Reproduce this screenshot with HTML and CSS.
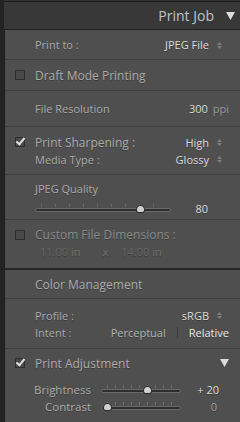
FILE: index.html
```html
<!DOCTYPE html>
<html lang="en">
<head>
  <meta charset="UTF-8">
  <title>Print Job</title>
  <link rel="stylesheet" href="styles.css">
</head>
<body>
  <div class="app">
    <div class="gutter"></div>
    <div class="main">
      <div class="prev-edge"></div>
      <div class="panel-head">
        <span class="panel-title">Print Job</span>
        <svg class="tri" width="9" height="8" viewBox="0 0 9 8"><path d="M0 0 H9 L4.5 8 Z" fill="#dcdcdc"/></svg>
      </div>

      <div class="panel">
        <div class="row row-printto">
          <span class="label">Print to :</span>
          <span class="value">JPEG File
            <svg class="stepper" width="5" height="7" viewBox="0 0 5 7"><path d="M0 3 L2.5 0 L5 3 Z M0 4 H5 L2.5 7 Z" fill="#7c7c7c"/></svg>
          </span>
        </div>

        <div class="row row-draft">
          <span class="check"></span>
          <span class="label big">Draft Mode Printing</span>
        </div>

        <div class="row row-res">
          <span class="label">File Resolution</span>
          <span class="value value-wide">300 <span class="unit">ppi</span></span>
        </div>

        <div class="row row-sharp">
          <div class="line">
            <span class="check checked"></span>
            <span class="label big">Print Sharpening :</span>
            <span class="value">High
              <svg class="stepper" width="5" height="7" viewBox="0 0 5 7"><path d="M0 3 L2.5 0 L5 3 Z M0 4 H5 L2.5 7 Z" fill="#7c7c7c"/></svg>
            </span>
          </div>
          <div class="line">
            <span class="label">Media Type :</span>
            <span class="value">Glossy
              <svg class="stepper" width="5" height="7" viewBox="0 0 5 7"><path d="M0 3 L2.5 0 L5 3 Z M0 4 H5 L2.5 7 Z" fill="#7c7c7c"/></svg>
            </span>
          </div>
        </div>

        <div class="row row-quality">
          <span class="label">JPEG Quality</span>
          <div class="slider-line">
            <div class="slider slider-long">
              <div class="ticks"></div>
              <div class="track"></div>
              <div class="thumb" style="left: 77%"></div>
            </div>
            <span class="slider-val">80</span>
          </div>
        </div>

        <div class="row row-dims">
          <div class="line">
            <span class="check"></span>
            <span class="label big dimmed">Custom File Dimensions :</span>
          </div>
          <div class="dims">
            <span><b>11.00</b> in</span>
            <span class="times">x</span>
            <span><b>14.00</b> in</span>
          </div>
        </div>

        <div class="row row-cm">
          <span class="label big">Color Management</span>
        </div>

        <div class="row row-profile">
          <div class="line">
            <span class="label">Profile :</span>
            <span class="value">sRGB
              <svg class="stepper" width="5" height="7" viewBox="0 0 5 7"><path d="M0 3 L2.5 0 L5 3 Z M0 4 H5 L2.5 7 Z" fill="#7c7c7c"/></svg>
            </span>
          </div>
          <div class="line">
            <span class="label">Intent :</span>
            <span class="intent">
              <span class="intent-off">Perceptual</span>
              <span class="bar"></span>
              <span class="intent-on">Relative</span>
            </span>
          </div>
        </div>

        <div class="row row-adjust">
          <div class="line adjust-head">
            <span class="check checked"></span>
            <span class="label big">Print Adjustment</span>
            <svg class="tri tri-adjust" width="9" height="8" viewBox="0 0 9 8"><path d="M0 0 H9 L4.5 8 Z" fill="#dcdcdc"/></svg>
          </div>
          <div class="adj">
            <span class="adj-label">Brightness</span>
            <div class="slider slider-short">
              <div class="ticks"></div>
              <div class="track"></div>
              <div class="thumb" style="left: 58%"></div>
            </div>
            <span class="adj-val">+ 20</span>
          </div>
          <div class="adj">
            <span class="adj-label">Contrast</span>
            <div class="slider slider-short">
              <div class="ticks"></div>
              <div class="track"></div>
              <div class="thumb" style="left: 8%"></div>
            </div>
            <span class="adj-val">0</span>
          </div>
        </div>
      </div>
    </div>
  </div>
</body>
</html>
```

FILE: styles.css
```css
* {
  margin: 0;
  padding: 0;
  box-sizing: border-box;
}

body {
  background-color: #2c2c2c;
  font-family: "Open Sans", "Liberation Sans", sans-serif;
  font-size: 11px;
  color: #ababab;
  width: 240px;
  height: 422px;
  overflow: hidden;
}

.app {
  display: flex;
  height: 422px;
}

.gutter {
  width: 4px;
  background-color: #242424;
}

.main {
  flex: 1;
  display: flex;
  flex-direction: column;
}

.prev-edge {
  height: 2px;
  border-bottom: 1px solid #1c1c1c;
  background-color: #333;
}

.panel-head {
  height: 27px;
  background-color: #383838;
  display: flex;
  align-items: center;
  justify-content: flex-end;
  padding-right: 5px;
  gap: 12px;
}

.panel-title {
  font-size: 14px;
  color: #c2c2c2;
}

.tri {
  display: block;
}

.tri-adjust {
  margin-left: auto;
  margin-right: 0;
}

.panel {
  flex: 1;
  background-color: #4f4f4f;
  border: 1px solid #1e1e1e;
  border-right: none;
  border-bottom: none;
  text-shadow: 0 1px 0 rgba(0, 0, 0, 0.25);
}

.row {
  border-bottom: 1px solid #3c3c3c;
  padding: 0 11px 0 30px;
  display: flex;
  align-items: center;
  position: relative;
}

.row-printto { height: 30px; }
.row-draft { height: 31px; }
.row-res { height: 36px; }
.row-sharp { height: 48px; flex-direction: column; align-items: stretch; justify-content: center; }
.row-quality { height: 45px; flex-direction: column; align-items: stretch; padding-top: 6px; }
.row-dims { height: 50px; flex-direction: column; align-items: stretch; padding-top: 6px; border-bottom: 2px solid #262626; }
.row-cm { height: 29px; }
.row-profile { height: 50px; flex-direction: column; align-items: stretch; justify-content: center; }
.row-adjust { border-bottom: none; flex-direction: column; align-items: stretch; padding-top: 5px; }

.line {
  display: flex;
  align-items: center;
  height: 17px;
  position: relative;
}

.label.big {
  font-size: 12px;
}

.dimmed {
  color: #8a8a8a;
}

.value {
  margin-left: auto;
  color: #dcdcdc;
  padding-right: 20px;
  position: relative;
}

.value-wide {
  padding-right: 0;
}

.unit {
  color: #9a9a9a;
  margin-left: 2px;
}

.stepper {
  position: absolute;
  right: 7px;
  top: 50%;
  margin-top: -3px;
}

.check {
  position: absolute;
  left: -20px;
  top: 50%;
  margin-top: -5px;
  width: 10px;
  height: 10px;
  border: 1px solid #2e2e2e;
  background-color: #4a4a4a;
}

.check.checked::after {
  content: "";
  position: absolute;
  left: 2px;
  top: -2px;
  width: 3px;
  height: 7px;
  border-right: 2px solid #e0e0e0;
  border-bottom: 2px solid #e0e0e0;
  transform: rotate(40deg);
}

.row-draft .check {
  left: 10px;
}

.slider-line {
  display: flex;
  align-items: center;
  margin-top: 5px;
}

.slider {
  position: relative;
  height: 12px;
}

.slider-long {
  width: 136px;
}

.slider-short {
  width: 80px;
}

.ticks {
  position: absolute;
  left: 6px;
  right: 6px;
  top: 1px;
  height: 3px;
  background-image: repeating-linear-gradient(90deg, #6a6a6a 0 1px, transparent 1px 14px);
}

.slider-short .ticks {
  background-image: repeating-linear-gradient(90deg, #6a6a6a 0 1px, transparent 1px 8px);
}

.track {
  position: absolute;
  left: 0;
  right: 0;
  top: 5px;
  height: 4px;
  border-radius: 2px;
  background-color: #2e2e2e;
  border: 1px solid #6a6a6a;
}

.thumb {
  position: absolute;
  top: 2px;
  width: 9px;
  height: 8px;
  margin-left: -4px;
  background-color: #cfcfcf;
  border: 1px solid #2a2a2a;
  border-radius: 50% 50% 3px 3px / 70% 70% 3px 3px;
}

.slider-val {
  margin-left: auto;
  margin-right: 21px;
  color: #dcdcdc;
}

.dims {
  display: flex;
  align-items: center;
  height: 17px;
  padding-left: 5px;
  color: #727272;
}

.dims b {
  font-weight: normal;
  color: #666;
}

.times {
  margin: 0 13px 0 22px;
}

.intent {
  margin-left: auto;
  display: flex;
  align-items: center;
}

.intent-off {
  color: #b4b4b4;
}

.bar {
  width: 1px;
  height: 11px;
  background-color: #3a3a3a;
  margin: 0 11px;
}

.intent-on {
  color: #ececec;
}

.adjust-head {
  height: 18px;
  margin-bottom: 9px;
}

.adj {
  display: flex;
  align-items: center;
  height: 17px;
  margin-left: -30px;
}

.adj-label {
  width: 86px;
  text-align: right;
  margin-right: 10px;
  font-size: 11.5px;
}

.adj-val {
  margin-left: auto;
  margin-right: 10px;
  color: #dcdcdc;
}

.adj:last-child .adj-val {
  color: #a0a0a0;
  margin-right: 12px;
}
```
